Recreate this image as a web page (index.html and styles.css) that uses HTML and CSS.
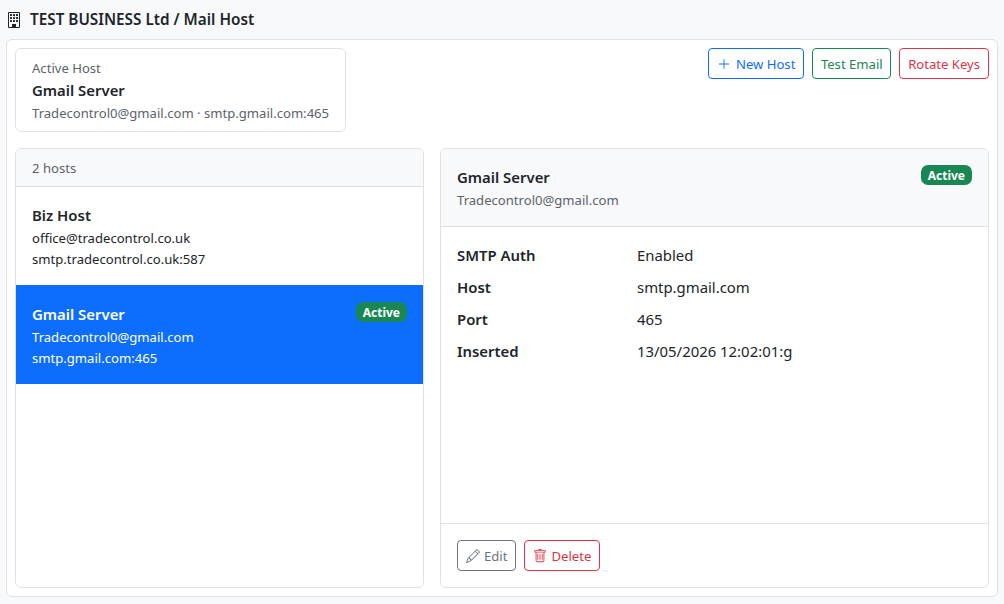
FILE: index.html
```html
<!DOCTYPE html>
<html lang="en">
<head>
<meta charset="utf-8">
<title>Mail Host</title>
<link rel="stylesheet" href="styles.css">
</head>
<body>
<header class="page-title">
  <svg class="ico" width="16" height="16" viewBox="0 0 16 16" fill="currentColor"><path d="M4 2.5a.5.5 0 0 1 .5-.5h1a.5.5 0 0 1 .5.5v1a.5.5 0 0 1-.5.5h-1a.5.5 0 0 1-.5-.5zm3 0a.5.5 0 0 1 .5-.5h1a.5.5 0 0 1 .5.5v1a.5.5 0 0 1-.5.5h-1a.5.5 0 0 1-.5-.5zm3.5-.5a.5.5 0 0 0-.5.5v1a.5.5 0 0 0 .5.5h1a.5.5 0 0 0 .5-.5v-1a.5.5 0 0 0-.5-.5zM4 5.5a.5.5 0 0 1 .5-.5h1a.5.5 0 0 1 .5.5v1a.5.5 0 0 1-.5.5h-1a.5.5 0 0 1-.5-.5zM7.5 5a.5.5 0 0 0-.5.5v1a.5.5 0 0 0 .5.5h1a.5.5 0 0 0 .5-.5v-1a.5.5 0 0 0-.5-.5zm2.5.5a.5.5 0 0 1 .5-.5h1a.5.5 0 0 1 .5.5v1a.5.5 0 0 1-.5.5h-1a.5.5 0 0 1-.5-.5zM4.5 8a.5.5 0 0 0-.5.5v1a.5.5 0 0 0 .5.5h1a.5.5 0 0 0 .5-.5v-1a.5.5 0 0 0-.5-.5zm2.5.5a.5.5 0 0 1 .5-.5h1a.5.5 0 0 1 .5.5v1a.5.5 0 0 1-.5.5h-1a.5.5 0 0 1-.5-.5zm3.5-.5a.5.5 0 0 0-.5.5v1a.5.5 0 0 0 .5.5h1a.5.5 0 0 0 .5-.5v-1a.5.5 0 0 0-.5-.5z"/><path d="M2 1a1 1 0 0 1 1-1h10a1 1 0 0 1 1 1v14a1 1 0 0 1-1 1H3a1 1 0 0 1-1-1zm11 0H3v14h3v-2.5a.5.5 0 0 1 .5-.5h3a.5.5 0 0 1 .5.5V15h3z"/><path d="M6 12.5h4V16H6z"/></svg>
  <span>TEST BUSINESS Ltd / Mail Host</span>
</header>
<main class="shell">
  <section class="top-row">
    <div class="summary">
      <div class="muted">Active Host</div>
      <div class="name">Gmail Server</div>
      <div class="muted">Tradecontrol0@gmail.com · smtp.gmail.com:465</div>
    </div>
    <div class="actions">
      <button class="btn btn-blue btn-new"><svg width="14" height="14" viewBox="0 0 16 16" fill="currentColor"><path d="M8 2a.5.5 0 0 1 .5.5v5h5a.5.5 0 0 1 0 1h-5v5a.5.5 0 0 1-1 0v-5h-5a.5.5 0 0 1 0-1h5v-5A.5.5 0 0 1 8 2"/></svg>New Host</button>
      <button class="btn btn-green">Test Email</button>
      <button class="btn btn-red">Rotate Keys</button>
    </div>
  </section>
  <section class="columns">
    <div class="card list">
      <div class="list-head muted">2 hosts</div>
      <div class="item">
        <div class="name">Biz Host</div>
        <div>office@tradecontrol.co.uk</div>
        <div>smtp.tradecontrol.co.uk:587</div>
      </div>
      <div class="item selected">
        <span class="badge badge-over">Active</span>
        <div class="name">Gmail Server</div>
        <div>Tradecontrol0@gmail.com</div>
        <div>smtp.gmail.com:465</div>
      </div>
    </div>
    <div class="card detail">
      <div class="detail-head">
        <div>
          <div class="detail-name">Gmail Server</div>
          <div class="muted">Tradecontrol0@gmail.com</div>
        </div>
        <span class="badge badge-head">Active</span>
      </div>
      <dl class="fields">
        <dt>SMTP Auth</dt><dd>Enabled</dd>
        <dt>Host</dt><dd>smtp.gmail.com</dd>
        <dt>Port</dt><dd>465</dd>
        <dt>Inserted</dt><dd>13/05/2026 12:02:01:g</dd>
      </dl>
      <div class="detail-foot">
        <button class="btn btn-gray"><svg width="14" height="14" viewBox="0 0 16 16" fill="currentColor"><path d="M12.146.146a.5.5 0 0 1 .708 0l3 3a.5.5 0 0 1 0 .708l-10 10a.5.5 0 0 1-.168.11l-5 2a.5.5 0 0 1-.65-.65l2-5a.5.5 0 0 1 .11-.168zM11.207 2.5 13.5 4.793 14.793 3.5 12.5 1.207zm1.586 3L10.5 3.207 4 9.707V10h.5a.5.5 0 0 1 .5.5v.5h.5a.5.5 0 0 1 .5.5v.5h.293zm-9.761 5.175-.106.106-1.528 3.821 3.821-1.528.106-.106A.5.5 0 0 1 5 12.5V12h-.5a.5.5 0 0 1-.5-.5V11h-.5a.5.5 0 0 1-.468-.325"/></svg>Edit</button>
        <button class="btn btn-red"><svg width="14" height="14" viewBox="0 0 16 16" fill="currentColor"><path d="M5.5 5.5A.5.5 0 0 1 6 6v6a.5.5 0 0 1-1 0V6a.5.5 0 0 1 .5-.5m2.5 0a.5.5 0 0 1 .5.5v6a.5.5 0 0 1-1 0V6a.5.5 0 0 1 .5-.5m3 .5a.5.5 0 0 0-1 0v6a.5.5 0 0 0 1 0z"/><path d="M14.5 3a1 1 0 0 1-1 1H13v9a2 2 0 0 1-2 2H5a2 2 0 0 1-2-2V4h-.5a1 1 0 0 1-1-1V2a1 1 0 0 1 1-1H6a1 1 0 0 1 1-1h2a1 1 0 0 1 1 1h3.5a1 1 0 0 1 1 1zM4.118 4 4 4.059V13a1 1 0 0 0 1 1h6a1 1 0 0 0 1-1V4.059L11.882 4zM2.5 3h11V2h-11z"/></svg>Delete</button>
      </div>
    </div>
  </section>
</main>
</body>
</html>
```
FILE: styles.css
```css
* { box-sizing: border-box; }
html, body { height: 100%; }
body {
  margin: 0;
  padding: 0 6px 7px;
  width: 1004px;
  height: 604px;
  overflow: hidden;
  display: flex;
  flex-direction: column;
  background: #f8f9fa;
  color: #212529;
  font: 13.1px/21px "Noto Sans", "Open Sans", sans-serif;
}
.page-title {
  height: 39px;
  display: flex;
  align-items: center;
  gap: 8px;
  font-size: 15.3px;
  font-weight: 600;
}
.ico { flex: none; }
.shell {
  flex: 1;
  min-height: 0;
  display: flex;
  flex-direction: column;
  gap: 16px;
  background: #fff;
  border: 1px solid #dee2e6;
  border-radius: 6px;
  padding: 8px;
}
.top-row { display: flex; justify-content: space-between; align-items: flex-start; }
.summary {
  width: 331px;
  height: 84px;
  border: 1px solid #dee2e6;
  border-radius: 6px;
  padding: 9px 16px;
  white-space: nowrap;
}
.muted { color: #5c636a; }
.summary .name { margin-bottom: 2px; }
.name { font-size: 14.9px; font-weight: 600; line-height: 22px; }
.actions { display: flex; gap: 8px; }
.btn {
  display: inline-flex;
  align-items: center;
  gap: 4px;
  height: 31px;
  padding: 1px 8px 0;
  background: #fff;
  border: 1px solid;
  border-radius: 4px;
  font: inherit;
  cursor: pointer;
}
.btn-new { gap: 5px; }
.btn-blue { color: #0d6efd; border-color: #0d6efd; }
.btn-green { color: #198754; border-color: #198754; padding-inline: 7.5px; }
.btn-red { color: #dc3545; border-color: #dc3545; }
.btn-gray { color: #6c757d; border-color: #6c757d; }
.columns {
  flex: 1;
  min-height: 0;
  display: grid;
  grid-template-columns: 409px 549px;
  gap: 16px;
}
.card {
  border: 1px solid #dee2e6;
  border-radius: 6px;
  overflow: hidden;
  display: flex;
  flex-direction: column;
}
.list-head {
  height: 38px;
  display: flex;
  align-items: center;
  padding: 2px 16px 0;
  background: #f8f9fa;
  border-bottom: 1px solid #dee2e6;
}
.item {
  position: relative;
  height: 98px;
  padding: 17px 16px 0;
}
.item .name { margin-bottom: 2px; }
.selected { height: 99px; padding-top: 18px; background: #0d6efd; color: #fff; }
.badge {
  height: 20px;
  padding: 0 7px;
  display: inline-flex;
  align-items: center;
  border-radius: 7px;
  background: #198754;
  color: #fff;
  font-size: 12px;
  font-weight: 700;
}
.badge-over { position: absolute; top: 17px; right: 16px; }
.badge-head { margin-top: -1px; }
.detail-head {
  height: 78px;
  display: flex;
  justify-content: space-between;
  align-items: flex-start;
  padding: 17px 16px 0;
  background: #f8f9fa;
  border-bottom: 1px solid #dee2e6;
}
.detail-name { font-size: 14.9px; font-weight: 600; line-height: 22px; margin-bottom: 2px; }
.fields {
  flex: 1;
  margin: 0;
  padding: 12px 16px 0;
  display: grid;
  grid-template-columns: 180px 1fr;
  grid-auto-rows: 32px;
  align-items: center;
  font-size: 14.9px;
}
.fields dt { font-weight: 600; }
.fields dd { margin: 0; }
.detail-foot {
  height: 64px;
  display: flex;
  gap: 8px;
  align-items: flex-start;
  padding: 16px 16px 0;
  border-top: 1px solid #dee2e6;
}
```
